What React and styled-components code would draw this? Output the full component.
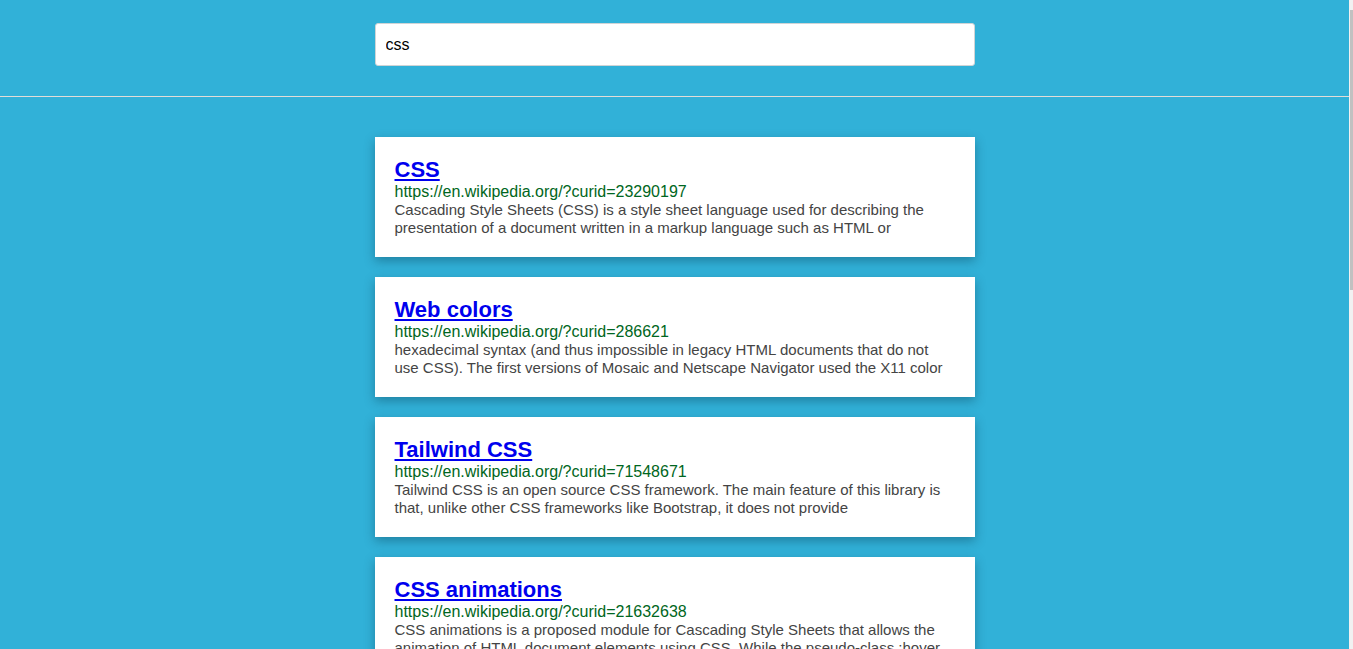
import React from 'react'
import styled, { createGlobalStyle } from 'styled-components'

const BLUE_BG = '#31b1d8'

const GlobalStyle = createGlobalStyle`
  html, body {
    margin: 0;
    padding: 0;
    background: ${BLUE_BG};
    font-family: Arial, "Liberation Sans", Helvetica, sans-serif;
  }
  body {
    margin-right: 4px;
  }
`

const ScrollTrack = styled.div`
  position: fixed;
  top: 0;
  right: 0;
  bottom: 0;
  width: 4px;
  background: #f1f1f1;
`

const ScrollThumb = styled.div`
  margin-top: 10px;
  margin-left: 1px;
  height: 280px;
  background: #c1c1c1;
`

const Header = styled.header`
  height: 97px;
  border-bottom: 1px solid #e2ddd8;
  display: flex;
  justify-content: center;
  align-items: flex-start;
  padding-top: 23px;
  box-sizing: border-box;
`

const SearchInput = styled.input`
  width: 600px;
  height: 43px;
  box-sizing: border-box;
  border: 1px solid #cfd4d6;
  border-radius: 3px;
  padding: 0 10px;
  font-family: Arial, "Liberation Sans", sans-serif;
  font-size: 16px;
  color: #000;
  background: #fff;
  outline: none;
`

const Results = styled.main`
  display: flex;
  flex-direction: column;
  align-items: center;
  gap: 20px;
  padding: 40px 0;
`

const Card = styled.article`
  width: 600px;
  box-sizing: border-box;
  background: #fff;
  padding: 20px;
  box-shadow: 0 4px 10px rgba(0, 40, 60, 0.35);
`

const Title = styled.a`
  display: inline-block;
  font-size: 22px;
  font-weight: bold;
  line-height: 26px;
  color: #0000ee;
  text-decoration: underline;
`

const Url = styled.div`
  font-size: 16px;
  line-height: 18px;
  color: #006621;
`

const Snippet = styled.p`
  margin: 0;
  font-size: 15px;
  line-height: 18px;
  color: #444;
`

const results = [
  {
    title: 'CSS',
    id: '23290197',
    text: 'Cascading Style Sheets (CSS) is a style sheet language used for describing the presentation of a document written in a markup language such as HTML or',
  },
  {
    title: 'Web colors',
    id: '286621',
    text: 'hexadecimal syntax (and thus impossible in legacy HTML documents that do not use CSS). The first versions of Mosaic and Netscape Navigator used the X11 color',
  },
  {
    title: 'Tailwind CSS',
    id: '71548671',
    text: 'Tailwind CSS is an open source CSS framework. The main feature of this library is that, unlike other CSS frameworks like Bootstrap, it does not provide',
  },
  {
    title: 'CSS animations',
    id: '21632638',
    text: 'CSS animations is a proposed module for Cascading Style Sheets that allows the animation of HTML document elements using CSS. While the pseudo-class :hover',
  },
  {
    title: 'CSS Zen Garden',
    id: '1071916',
    text: 'The CSS Zen Garden is a web design resource demonstrating the power of CSS-based design. The site features a single HTML file with many style sheets',
  },
]

export default function App() {
  return (
    <>
      <GlobalStyle />
      <Header>
        <SearchInput defaultValue="css" />
      </Header>
      <Results>
        {results.map((r) => (
          <Card key={r.id}>
            <Title href={`https://en.wikipedia.org/?curid=${r.id}`}>{r.title}</Title>
            <Url>https://en.wikipedia.org/?curid={r.id}</Url>
            <Snippet>{r.text}</Snippet>
          </Card>
        ))}
      </Results>
      <ScrollTrack>
        <ScrollThumb />
      </ScrollTrack>
    </>
  )
}
